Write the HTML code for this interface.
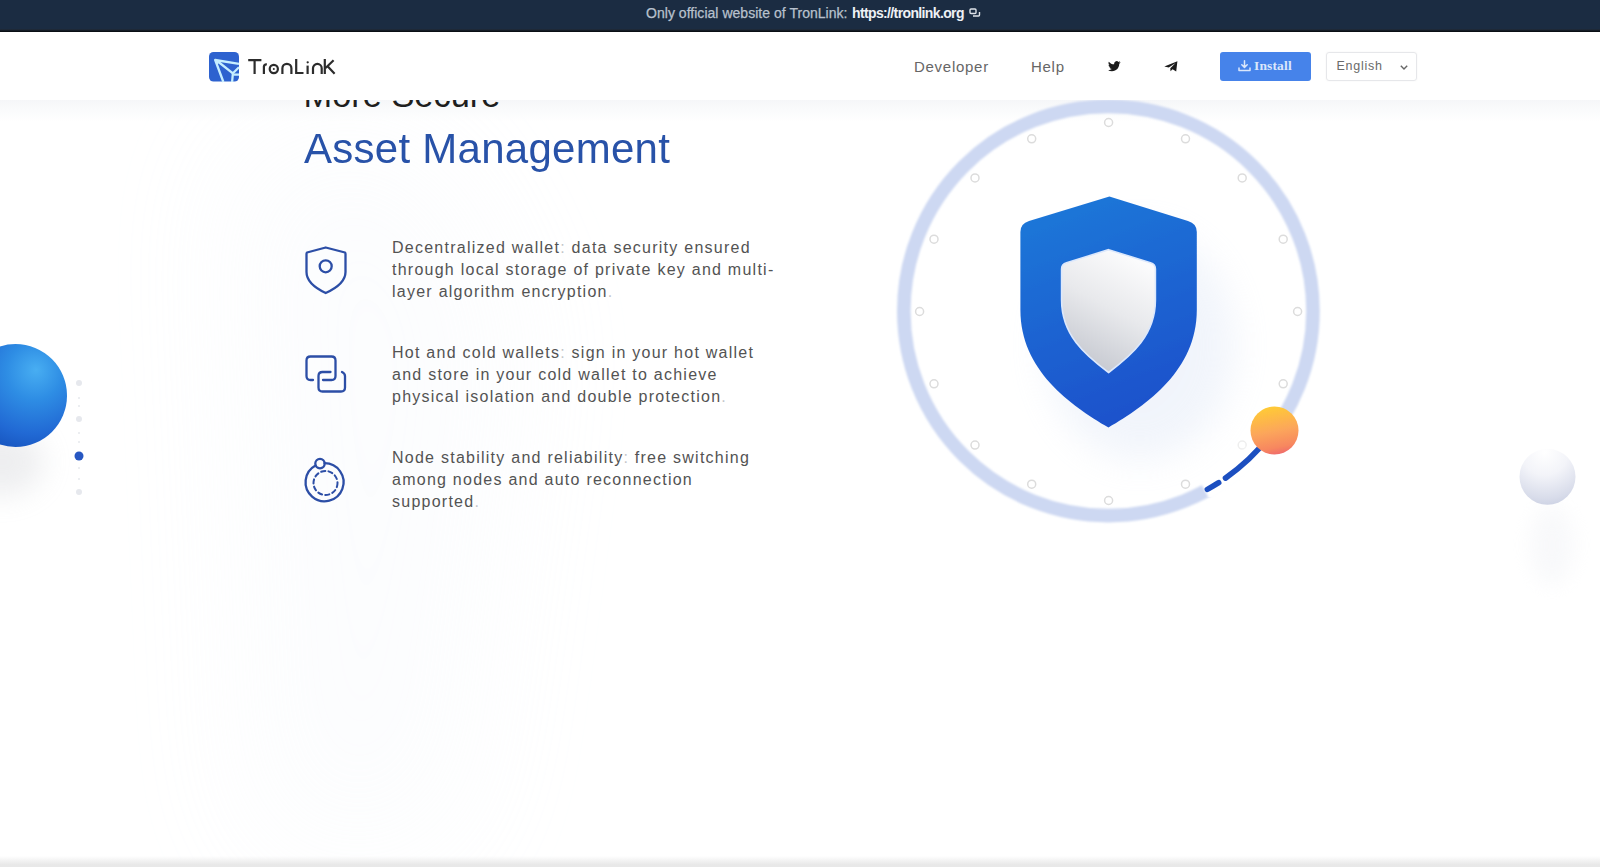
<!DOCTYPE html>
<html><head><meta charset="utf-8">
<style>
*{margin:0;padding:0;box-sizing:border-box}
html,body{width:1600px;height:867px;overflow:hidden;background:#fff;font-family:"Liberation Sans",sans-serif}
.abs{position:absolute}
svg{overflow:visible}
#bg{position:absolute;left:0;top:0;width:1600px;height:867px;z-index:0}
#topbar{position:absolute;left:0;top:0;width:1600px;height:32px;background:#1b2c42;z-index:10}
#topbar .line{position:absolute;left:0;top:29px;width:1600px;height:3px;background:linear-gradient(#232f3f,#05080c)}
#topbar .t1{position:absolute;left:646px;top:5px;-webkit-text-stroke:0.25px #b8c1cd;font-size:14px;color:#b8c1cd;letter-spacing:0.03px;white-space:nowrap}
#topbar .t2{position:absolute;left:852px;top:5px;font-size:14px;color:#eef1f5;font-weight:bold;letter-spacing:-0.63px;white-space:nowrap}
#header{position:absolute;left:0;top:32px;width:1600px;height:67.5px;background:#fff;z-index:5}
#hshadow{position:absolute;left:0;top:99px;width:1600px;height:23px;background:linear-gradient(#f5f6f8,#fafbfc 50%,rgba(255,255,255,0));z-index:1}
#bottom{position:absolute;left:0;top:856px;width:1600px;height:11px;background:linear-gradient(rgba(232,232,232,0),#f0f0f0 50%,#e8e8e8 80%);z-index:3}
.nav{position:absolute;top:25.9px;font-size:15px;color:#666;letter-spacing:0.72px}
.btn{position:absolute;left:1220px;top:20px;width:91px;height:29px;background:#4683ea;border-radius:3px}
.btn span{position:absolute;left:34px;top:6px;color:#dbe7fb;font-family:"Liberation Serif",serif;font-weight:bold;font-size:13.5px;letter-spacing:0.15px}
.sel{position:absolute;left:1326px;top:20px;width:91px;height:29px;border:1px solid #e6e7ea;border-radius:3px;box-shadow:0 0 2px rgba(0,0,0,0.05)}
.sel span{position:absolute;left:9.5px;top:6px;font-size:12.5px;color:#6a6a6a;letter-spacing:0.75px}
#more{position:absolute;left:303.5px;top:75.6px;font-size:34.4px;color:#1e1e1e;z-index:2}
#title{position:absolute;left:304px;top:124.5px;font-size:42px;color:#2852a8;transform:scaleY(1.015);transform-origin:0 38px;letter-spacing:0.27px;z-index:2}
.feat .p{color:#c4c6ca}
.feat{position:absolute;left:392px;font-size:16px;line-height:22.3px;color:#535353;letter-spacing:1.25px;z-index:2}
</style></head><body>
<svg id="bg" width="1600" height="867" viewBox="0 0 1600 867">
  <defs>
    <filter id="bgblur" x="-100%" y="-100%" width="300%" height="300%"><feGaussianBlur stdDeviation="70"/></filter>
  </defs>
  <g filter="url(#bgblur)" opacity="0.2">
    <path d="M230,150 L420,130 L520,320 L450,850 L260,850 Z" fill="#eef3f9"/>
  </g>
</svg>

<div id="topbar">
  <div class="t1">Only official website of TronLink:</div>
  <div class="t2">https://tronlink.org</div>
  <svg class="abs" style="left:969px;top:8px" width="12" height="10" viewBox="0 0 12 10">
    <g fill="none" stroke="#dfe4ea" stroke-width="1.4"><rect x="1" y="1" width="6" height="4.5" rx="1"/><path d="M4,8 H9.5 Q10.5,8 10.5,7 V4"/></g>
  </svg>
  <div class="line"></div>
</div>

<div id="more">More Secure</div>
<div id="hshadow"></div>
<div id="header">
  <!-- logo icon -->
  <svg class="abs" style="left:208.5px;top:20px" width="30" height="30" viewBox="0 0 30 30">
    <rect x="0" y="0" width="30" height="29.5" rx="4.5" fill="#2d62cf"/>
    <g fill="none" stroke="#c6eeff" stroke-width="2.3" stroke-linejoin="round" stroke-linecap="butt">
      <path d="M30,11.8 L6.2,8 L14.4,30"/>
      <path d="M9.5,10 L23.9,21.3 L30,15.3"/>
      <path d="M23.9,21.3 L23.1,30"/>
      <path d="M24.5,22.6 L30,22.6"/>
    </g>
    <path d="M5.6,7.6 L11.5,9 L8.3,12.5 Z" fill="#c6eeff"/>
  </svg>
  <!-- logo text -->
  <svg class="abs" style="left:0;top:-32px" width="400" height="100" viewBox="0 0 400 100">
    <g fill="none" stroke="#2c2c2c" stroke-width="2.2" stroke-linecap="butt">
      <path d="M248.2,60.1 H261.4 M254.6,60.1 V74"/>
      <path d="M263.9,74 V66.5 Q264.2,64.6 266.8,64.2"/>
      <circle cx="273.8" cy="69" r="4.1"/>
      <path d="M282.4,74 V68.3 A4.5,4.5 0 0 1 291.4,68.3 V74"/>
      <path d="M296.2,58.9 V73 H303.5"/>
      <path d="M307.6,65.6 V74"/>
      <path d="M313,74 V68.3 A4.35,4.35 0 0 1 321.7,68.3 V74"/>
      <path d="M324.8,58.9 V74 M333.6,60.2 L325.6,68 M327.6,66.3 L334.6,73.8"/>
    </g>
    <circle cx="273.8" cy="69" r="1" fill="#2c2c2c"/>
    <circle cx="307.7" cy="62.3" r="1.15" fill="#2c2c2c"/>
  </svg>
  <div class="nav" style="left:914px">Developer</div>
  <div class="nav" style="left:1031px">Help</div>
  <!-- twitter -->
  <svg class="abs" style="left:1108px;top:29px" width="12.5" height="11" viewBox="0 0 24 21">
    <path fill="#1b1b1b" d="M23.95,2.57a10,10 0 0 1-2.82.77 4.96,4.96 0 0 0 2.16-2.72c-.95.56-2 .96-3.13,1.18a4.92,4.92 0 0 0-8.38,4.48C7.69,6.1 4.07,4.13 1.64,1.16a4.82,4.82 0 0 0-.67,2.48c0,1.71.87,3.21 2.19,4.1a4.9,4.9 0 0 1-2.23-.62v.06a4.92,4.92 0 0 0 3.95,4.83 5,5 0 0 1-2.21.08 4.94,4.94 0 0 0 4.6,3.42 9.87,9.87 0 0 1-6.1,2.1c-.39,0-.78-.02-1.17-.07a14,14 0 0 0 7.56,2.21c9.05,0 14-7.5 14-13.99 0-.21 0-.42-.02-.63A9.94,9.94 0 0 0 24,2.59z"/>
  </svg>
  <!-- telegram -->
  <svg class="abs" style="left:1163.5px;top:28.5px" width="14" height="11" viewBox="0 0 14 11">
    <path fill="#1b1b1b" d="M0.3,5.4 L13.4,0.2 L12.2,10.6 L8.6,8.2 L6.5,10.2 L6.3,7.3 L11.6,2 L4.8,6.5 Z M0.3,5.4 L4.8,6.5"/>
  </svg>
  <div class="btn">
    <svg class="abs" style="left:18px;top:8px" width="13" height="12" viewBox="0 0 13 12">
      <g fill="none" stroke="#dbe7fb" stroke-width="1.5" stroke-linecap="round" stroke-linejoin="round">
        <path d="M6.5,0.8 V7.2 M3.8,4.8 L6.5,7.4 L9.2,4.8"/>
        <path d="M1,8 V10.6 H12 V8"/>
      </g>
    </svg>
    <span>Install</span>
  </div>
  <div class="sel"><span>English</span>
    <svg class="abs" style="left:73px;top:11.5px" width="8" height="5" viewBox="0 0 8 5"><path d="M0.8,0.8 L4,4 L7.2,0.8" fill="none" stroke="#666" stroke-width="1.4"/></svg>
  </div>
</div>

<div id="title">Asset Management</div>

<svg class="abs" style="left:0;top:0;z-index:2" width="1600" height="867" viewBox="0 0 1600 867">
  <defs>
    <radialGradient id="sphB" cx="0.66" cy="0.3" r="0.78" fx="0.7" fy="0.25">
      <stop offset="0" stop-color="#48aef2"/>
      <stop offset="0.35" stop-color="#2e8de4"/>
      <stop offset="0.75" stop-color="#2169d4"/>
      <stop offset="1" stop-color="#1753bd"/>
    </radialGradient>
    <radialGradient id="sphW" cx="0.45" cy="0.05" r="1.05">
      <stop offset="0" stop-color="#ffffff"/>
      <stop offset="0.4" stop-color="#f3f4f9"/>
      <stop offset="0.8" stop-color="#d8dcea"/>
      <stop offset="1" stop-color="#c6cce0"/>
    </radialGradient>
    <linearGradient id="orb" x1="0.4" y1="0" x2="0.6" y2="1">
      <stop offset="0" stop-color="#ffcb35"/>
      <stop offset="0.5" stop-color="#fca75a"/>
      <stop offset="0.85" stop-color="#f7875f"/>
      <stop offset="1" stop-color="#ef6a6c"/>
    </linearGradient>
    <linearGradient id="shO" x1="0.3" y1="0" x2="0.6" y2="1">
      <stop offset="0" stop-color="#1f77d8"/>
      <stop offset="1" stop-color="#1a50cb"/>
    </linearGradient>
    <linearGradient id="shI" x1="0.7" y1="0.05" x2="0.3" y2="1">
      <stop offset="0" stop-color="#fbfbfc"/>
      <stop offset="0.45" stop-color="#e8e9ec"/>
      <stop offset="1" stop-color="#c3c6ce"/>
    </linearGradient>
    <filter id="blur14" x="-80%" y="-80%" width="260%" height="260%"><feGaussianBlur stdDeviation="14"/></filter>
    <filter id="blur10" x="-50%" y="-50%" width="200%" height="200%"><feGaussianBlur stdDeviation="10"/></filter>
    <filter id="blur20" x="-80%" y="-80%" width="260%" height="260%"><feGaussianBlur stdDeviation="18"/></filter>
    <filter id="soft2" x="-10%" y="-10%" width="120%" height="120%"><feGaussianBlur stdDeviation="1.3"/></filter>
    <filter id="soft" x="-10%" y="-10%" width="120%" height="120%"><feGaussianBlur stdDeviation="0.6"/></filter>
  </defs>

  <!-- feature icons -->
  <g fill="none" stroke="#2c4ea6" stroke-width="2.3" stroke-linecap="round" stroke-linejoin="round">
    <path d="M325.7,247.5 L345,252.5 Q345.5,253 345.5,254 L345.5,272 Q345.5,284 325.7,293 Q306.5,284 306.5,272 L306.5,254 Q306.5,253 307,252.5 Z"/>
    <circle cx="325.7" cy="266.3" r="6"/>
    <path d="M313,380 L310.5,380 Q306.5,380 306.5,376 L306.5,360.5 Q306.5,356.5 310.5,356.5 L331.5,356.5 Q335.5,356.5 335.5,360.5 L335.5,376 Q335.5,380 331.5,380 L323,380"/>
    <path d="M330.5,372 L322.5,372 Q318.5,372 318.5,376 L318.5,387.5 Q318.5,391.5 322.5,391.5 L341,391.5 Q345,391.5 345,387.5 L345,376 Q345,373.5 342,372"/>
    <path d="M315.5,465.5 A19,19 0 1 0 324.5,463.2"/>
    <circle cx="320" cy="463.6" r="4.7"/>
    <circle cx="325.5" cy="483" r="12" stroke-width="2" stroke-dasharray="4.2 3.2"/>
  </g>

  <!-- left blue sphere + shadow -->
  <ellipse cx="2" cy="462" rx="42" ry="34" fill="#c2c4ca" opacity="0.28" filter="url(#blur14)"/>
  <circle cx="15.5" cy="395.5" r="51.5" fill="url(#sphB)"/>
  <g fill="#e6e8ed">
    <circle cx="79" cy="383" r="3"/><circle cx="79" cy="419" r="3"/><circle cx="79" cy="492" r="3"/>
    <circle cx="79" cy="398" r="1"/><circle cx="79" cy="406" r="1"/><circle cx="79" cy="433" r="1"/><circle cx="79" cy="442" r="1"/><circle cx="79" cy="468" r="1"/><circle cx="79" cy="479" r="1"/>
  </g>
  <circle cx="79" cy="456" r="4.5" fill="#2757c2"/>

  <!-- right white sphere -->
  <ellipse cx="1552" cy="545" rx="22" ry="40" fill="#eceef3" opacity="0.35" filter="url(#blur10)"/>
  <circle cx="1547.5" cy="476.8" r="28" fill="url(#sphW)" filter="url(#soft)"/>

  <!-- ring -->
  <circle cx="1108.4" cy="311" r="204.6" fill="none" stroke="#cdd8f2" stroke-width="13.6" filter="url(#soft2)"/>
  <g filter="url(#soft)">
  <g fill="none" stroke="#dcdcdc" stroke-width="1.5"><circle cx="1108.6" cy="122.5" r="4"/><circle cx="1185.5" cy="138.8" r="4"/><circle cx="1242.2" cy="177.9" r="4"/><circle cx="1283.2" cy="239.2" r="4"/><circle cx="1297.6" cy="311.5" r="4"/><circle cx="1283.2" cy="383.8" r="4"/><circle cx="1242.2" cy="445.1" r="4" stroke="#eeeeee"/><circle cx="1185.5" cy="484.2" r="4"/><circle cx="1108.6" cy="500.5" r="4"/><circle cx="1031.7" cy="484.2" r="4"/><circle cx="975.0" cy="445.1" r="4"/><circle cx="934.0" cy="383.8" r="4"/><circle cx="919.6" cy="311.5" r="4"/><circle cx="934.0" cy="239.2" r="4"/><circle cx="975.0" cy="177.9" r="4"/><circle cx="1031.7" cy="138.8" r="4"/></g>
  </g>
  <!-- shield glow -->
  <ellipse cx="1140" cy="345" rx="95" ry="115" fill="#d2def3" opacity="0.3" filter="url(#blur20)"/>
  <g filter="url(#soft)">
  <path d="M1109.4,196.5 L1188,221 Q1196.8,223.5 1196.8,232 L1196.8,310 C1196.8,370 1147,405 1108.5,427.5 C1070,405 1020.4,370 1020.4,310 L1020.4,232 Q1020.4,223.5 1029,221 Z" fill="url(#shO)"/>
  <path d="M1108.6,249.7 L1150.5,262.8 Q1155.4,264.3 1155.4,269 L1155.4,300 C1155.4,335 1132,355 1108.6,372.5 C1085,355 1061.6,335 1061.6,300 L1061.6,269 Q1061.6,264.3 1066.5,262.8 Z" fill="url(#shI)" stroke="#dce8fc" stroke-width="1.6"/>
  </g>

  <!-- progress arc -->
  <path d="M1204.9,490.8 A204,204 0 0 0 1273.5,430.9" fill="none" stroke="#ffffff" stroke-width="20" filter="url(#soft2)"/>
  <path d="M1207.4,489.4 A204,204 0 0 0 1218.7,482.7 M1225.5,478.1 A204,204 0 0 0 1269.3,436.6" fill="none" stroke="#1e50c0" stroke-width="5.6" stroke-linecap="round" filter="url(#soft)"/>
  <circle cx="1274.5" cy="430.5" r="24" fill="url(#orb)" filter="url(#soft)"/>
</svg>

<div class="feat" style="top:236.8px">Decentralized wallet<span class="p">:</span> data security ensured<br>through local storage of private key and multi-<br>layer algorithm encryption<span class="p">.</span></div>
<div class="feat" style="top:341.9px">Hot and cold wallets<span class="p">:</span> sign in your hot wallet<br>and store in your cold wallet to achieve<br>physical isolation and double protection<span class="p">.</span></div>
<div id="bottom"></div>
<div class="feat" style="top:446.9px">Node stability and reliability<span class="p">:</span> free switching<br>among nodes and auto reconnection<br>supported<span class="p">.</span></div>


</body></html>
